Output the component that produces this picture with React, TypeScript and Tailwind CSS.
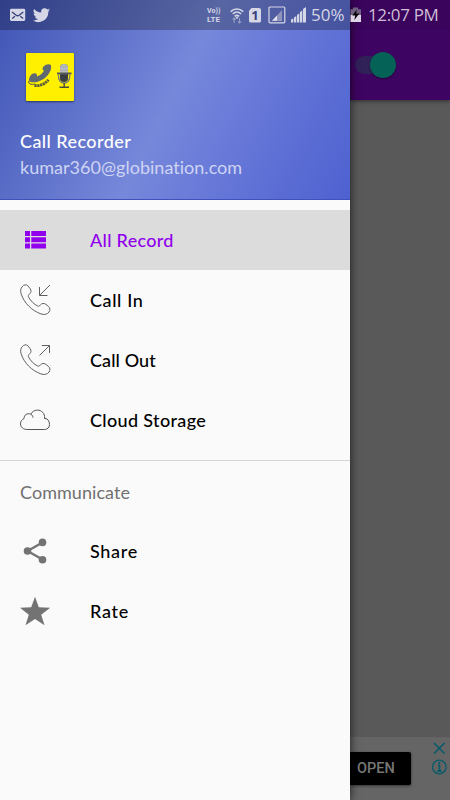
import React from "react";

function PhoneIcon({ out = false }: { out?: boolean }) {
  return (
    <svg width="32" height="32" viewBox="0 0 32 32" fill="none" stroke="#606060" strokeWidth="1">
      <path d="M2.2 2.7C3.7.7 6.4.2 7.8 1.7L10.3 4.9C11.4 6.6 11.2 8.3 9.8 9.7C8.3 11 7.9 11.9 8.7 13.3C10.8 17 13.7 20 17.6 22C18.6 22.5 19.4 22.1 20.3 21C21.7 19.2 24.1 19 25.9 20.3L28.5 22.5C30.3 24 30.3 26.2 29 28C27.3 30.4 24.4 31.1 20.9 29.9C11.5 26.5 4.1 19 1.1 9.7C.2 6.8.6 4.5 2.2 2.7Z" />
      {out ? <path d="M19.5 11.5L29.5 1.5M21.8 1.5H29.5V9" /> : <path d="M30 1L19.8 11.2M19.5 3V11.5H27.5" />}
    </svg>
  );
}

function ListIcon() {
  return (
    <svg width="32" height="32" viewBox="0 0 32 32" fill="#9100ed">
      <path d="M5 7h5v5H5zM11.3 7H26v5H11.3zM5 13.2h5v5H5zM11.3 13.2H26v5H11.3zM5 19.4h5v5H5zM11.3 19.4H26v5H11.3z" />
    </svg>
  );
}

function CloudIcon() {
  return (
    <svg width="32" height="32" viewBox="0 0 32 32" fill="none" stroke="#555" strokeWidth="1">
      <path d="M7.2 25.5H24.5C27.7 25.5 29.5 23.3 29.5 20.4C29.5 17 27.7 14.5 24.5 14.3C25.2 9.5 21.6 6.1 17.5 6.1C14.3 6.1 12 7.8 10.8 10.2C7.2 8.7 3.9 11 4.1 14.5C1.8 15.6.4 17.5.5 20C.6 23.2 3.4 25.5 7.2 25.5ZM10.8 10.2C12.2 11 12.9 12.2 13 13.7M24.5 14.3L26.4 14.8" />
    </svg>
  );
}

function ShareIcon() {
  return (
    <svg width="32" height="32" viewBox="0 0 32 32" fill="#737373">
      <path d="M22.5 7.5L7.5 16L22.5 24.5" fill="none" stroke="#737373" strokeWidth="2.3" />
      <circle cx="22.5" cy="7.4" r="3.8" /><circle cx="7.5" cy="16" r="3.8" /><circle cx="22.5" cy="24.7" r="3.8" />
    </svg>
  );
}

function StarIcon() {
  return (
    <svg width="32" height="32" viewBox="0 0 32 32" fill="#737373">
      <path d="M15 1.8L18.8 12.3L30.2 12.7L21.2 19.7L24.5 30.3L15 24L5.5 30.3L8.8 19.7L0 12.7L11.2 12.3Z" />
    </svg>
  );
}

function AppLogo() {
  return (
    <svg width="48" height="48" viewBox="0 0 48 48">
      <path d="M3 27.5C3 23.5 5.5 20.3 8.5 20.2C10.8 20.1 11.3 21.6 11 23.6C13.8 22.6 16.6 20.3 18 17.8C16.2 17.2 16.1 15.4 17.5 13.6C19.5 11 23.5 10.4 25 12.2C25.8 15 24.5 19 21.5 22.4C17.5 26.8 12 29.4 7.5 29.3C5.2 29.3 3.6 28.8 3 27.5Z" fill="#616970" />
      <path d="M3 28C2 31 5 32 9 31" fill="none" stroke="#49504f" strokeWidth="1" />
      <path d="M8.5 32.3C14 33.5 19 30.8 22.5 26.8" fill="none" stroke="#55583a" strokeWidth="2.8" strokeDasharray="2.2 .6" />
      <path d="M32.4 22C31.8 33 44.5 33 43.8 22" fill="none" stroke="#777b78" strokeWidth="1.3" />
      <rect x="34" y="11" width="8" height="18" rx="4" fill="#383d41" />
      <path d="M34 20V15A4 4 0 0 1 42 15V20Z" fill="#b9bcc0" />
      <path d="M35 14H41M34 17H42" stroke="#8d9296" strokeWidth=".8" strokeDasharray="1 .8" />
      <path d="M31 20.5H45.5" stroke="#565b59" strokeWidth="2" />
      <path d="M38.2 30V34M33.5 34.3H43" stroke="#494d39" strokeWidth="1.4" />
    </svg>
  );
}

function StatusBar() {
  return (
    <header className="absolute inset-x-0 top-0 z-20 flex h-[30px] items-center text-[#d5d6e6]">
      <div className="flex h-full w-[350px] shrink-0 items-center bg-black/25">
        <div className="flex w-[207px] shrink-0 items-center gap-[7px] pl-[10px]">
          <svg width="16" height="14" viewBox="0 0 16 14"><rect y=".8" width="15.2" height="12.2" rx="1.4" fill="#d5d6e6" /><path d="M2 4L6.2 7.2C7.4 8.1 8 8.1 9.2 7.2L13.3 4M2.2 10.6L5 8.2M13.1 10.6L10.3 8.2" fill="none" stroke="#344078" strokeWidth="1.3" /></svg>
          <svg width="17" height="15" viewBox="2 4.5 20 17" fill="#d5d6e6"><path d="M22 6.5a8 8 0 0 1-2.4.7 4 4 0 0 0 1.8-2.3 8 8 0 0 1-2.6 1A4.1 4.1 0 0 0 11.7 9.6 11.7 11.7 0 0 1 3.3 5.3a4.1 4.1 0 0 0 1.3 5.5 4 4 0 0 1-1.9-.5c0 2 1.4 3.6 3.3 4a4 4 0 0 1-1.9.1 4.1 4.1 0 0 0 3.9 2.8A8.3 8.3 0 0 1 2 18.9a11.7 11.7 0 0 0 18-10.3 8 8 0 0 0 2-2.1Z" /></svg>
        </div>
        <div className="flex w-[15px] shrink-0 flex-col items-start font-['Roboto',sans-serif] font-bold whitespace-nowrap">
          <span className="text-[7px] leading-[8px] tracking-[0.1px]">Vo))</span>
          <span className="text-[8px] leading-[9px]">LTE</span>
        </div>
        <svg className="ml-2 shrink-0" width="14" height="18" viewBox="0 0 14 18" fill="none" stroke="#d5d6e6">
          <path d="M.7 5.6C4.3 2 9.5 2 13.2 5.6M2.7 8C5.4 5.4 8.5 5.4 11.2 8M4.7 10.3C6.3 9 7.6 9 9.2 10.3" strokeWidth="1.5" /><circle cx="7" cy="11.7" r=".7" fill="#d5d6e6" /><path d="M4.2 12V17M2.7 13.5L4.2 12L5.7 13.5M9.5 12V17M8 15.5L9.5 17L11 15.5" opacity=".5" strokeWidth="1.1" />
        </svg>
        <div className="ml-[5px] flex h-[15px] w-[12px] shrink-0 items-center justify-center rounded-[2px] bg-[#d5d6e6] font-['Open_Sans',sans-serif] text-[13px] leading-none font-bold text-[#34427c] [clip-path:polygon(25%_0,100%_0,100%_100%,0_100%,0_22%)]">1</div>
        <svg className="ml-[7px] shrink-0" width="18" height="18" viewBox="0 0 18 18"><rect x="1" y="1" width="15.8" height="15.8" rx="1" fill="none" stroke="#d5d6e6" strokeWidth="1.2" /><path d="M4 15L14 4V15Z" fill="#8f94bd" /><path d="M4 14.8L9 9.5V14.8Z" fill="#e3e3ee" /></svg>
        <svg className="ml-[5px] shrink-0" width="15" height="16" viewBox="0 0 15 16" fill="#d5d6e6"><path d="M0 12.5L2.3 11.5V15.5H0zM3 10.5L5.3 9V15.5H3zM6 8L8.3 6.3V15.5H6zM9 5L11.3 3.5V15.5H9zM12 2L15 0V15.5H12z" /></svg>
        <span className="ml-[5px] shrink-0 whitespace-nowrap font-['Open_Sans',sans-serif] text-[17px]">50%</span>
      </div>
      <div className="flex h-full flex-1 items-center bg-black/5">
        <svg className="shrink-0" width="12" height="16" viewBox="0 0 12 16"><path d="M3 .5H8V2.2H11V8H.5V2.2H3Z" fill="#716181" /><path d="M.5 8H11V15H.5Z" fill="#ddd4e5" /><path d="M6.8 2.5L2.3 8.6H5.2L4.3 13L9.3 6.5H6.2Z" fill="#080408" /></svg>
        <span className="ml-[6px] whitespace-nowrap font-['Open_Sans',sans-serif] text-[17px] tracking-[-0.35px] text-[#cdbfd6]">12:07 PM</span>
      </div>
    </header>
  );
}

function MenuRow({ icon, label, active = false, tracking }: { icon: React.ReactNode; label: string; active?: boolean; tracking: string }) {
  return (
    <div className={`flex h-[60px] items-center pl-5 ${active ? "bg-[#dcdcdc] text-[#9100ed]" : "text-black"}`}>
      <span className="w-[70px] shrink-0">{icon}</span>
      <span className={`whitespace-nowrap pt-px text-[18px] font-medium ${tracking}`}>{label}</span>
    </div>
  );
}

export default function App() {
  return (
    <div className="relative flex h-[800px] w-[450px] overflow-hidden bg-[#595959] font-['Lato',sans-serif]">
      <aside className="z-10 flex w-[350px] shrink-0 flex-col bg-[#fafafa] shadow-[1px_0_8px_rgba(0,0,0,0.6)]">
        <div className="flex h-[200px] shrink-0 flex-col border-b border-[#3f52bb] bg-[linear-gradient(117deg,#4054b5_0%,#7688da_49%,#6a7bd9_64%,#4e61d0_100%)] pt-[53px] pl-5">
          <div className="ml-[6px] h-12 w-12 shrink-0 overflow-hidden rounded-[1px] bg-[#fff000] shadow-[0_1px_2px_rgba(0,0,0,0.5)]"><AppLogo /></div>
          <div className="mt-[27px] whitespace-nowrap text-[18px] leading-[26px] font-medium tracking-[0.43px] text-white">Call Recorder</div>
          <div className="whitespace-nowrap text-[18px] leading-[27px] tracking-[0.02px] text-[#ced4f3]">kumar360@globination.com</div>
        </div>
        <nav className="pt-[10px]">
          <MenuRow icon={<ListIcon />} label="All Record" active tracking="tracking-[0.3px]" />
          <MenuRow icon={<PhoneIcon />} label="Call In" tracking="tracking-[0.6px]" />
          <MenuRow icon={<PhoneIcon out />} label="Call Out" tracking="tracking-[0.1px]" />
          <MenuRow icon={<CloudIcon />} label="Cloud Storage" tracking="tracking-[0.35px]" />
          <div className="mt-[10px] border-t border-[#d5d5d5] pt-[18px] pl-5 text-[18px] leading-[26px] tracking-[0.05px] text-[#707070]">Communicate</div>
          <div className="pt-4">
            <MenuRow icon={<ShareIcon />} label="Share" tracking="tracking-[0.7px]" />
            <MenuRow icon={<StarIcon />} label="Rate" tracking="tracking-[0.7px]" />
          </div>
        </nav>
      </aside>
      <main className="flex flex-1 flex-col">
        <div className="h-[100px] shrink-0 bg-[#3e0461] pt-[52px] pl-[5px] shadow-[0_1px_4px_rgba(0,0,0,0.5)]">
          <div className="flex h-[26px] w-[41px] items-center"><div className="flex h-[18px] w-[34px] items-center rounded-full bg-[#302158] pl-[15px]"><div className="h-[26px] w-[26px] shrink-0 rounded-full bg-[#056257] shadow-[0_1px_2px_rgba(0,0,0,0.4)]" /></div></div>
        </div>
        <div className="flex-1" />
        <div className="flex h-[63px] shrink-0 bg-[#656565]">
          <div className="mt-[15px] flex h-[33px] w-[61px] items-center rounded-r-[2px] bg-black pl-[7px] font-['Roboto',sans-serif] text-[14.5px] font-medium text-[#777] shadow-[0_1px_3px_rgba(0,0,0,0.5)]">OPEN</div>
          <svg className="ml-5 mt-[4px]" width="18" height="36" viewBox="0 0 18 36" fill="none" stroke="#075a69" strokeWidth="1.6"><path d="M3 2L13.5 12.5M13.5 2L3 12.5" /><circle cx="8.3" cy="26" r="6.8" strokeWidth="1.3" /><path d="M8.5 24.5V30M7 24.5H9M6.5 30H10.5M8.3 21V23" strokeWidth="1.8" /></svg>
        </div>
      </main>
      <StatusBar />
    </div>
  );
}
